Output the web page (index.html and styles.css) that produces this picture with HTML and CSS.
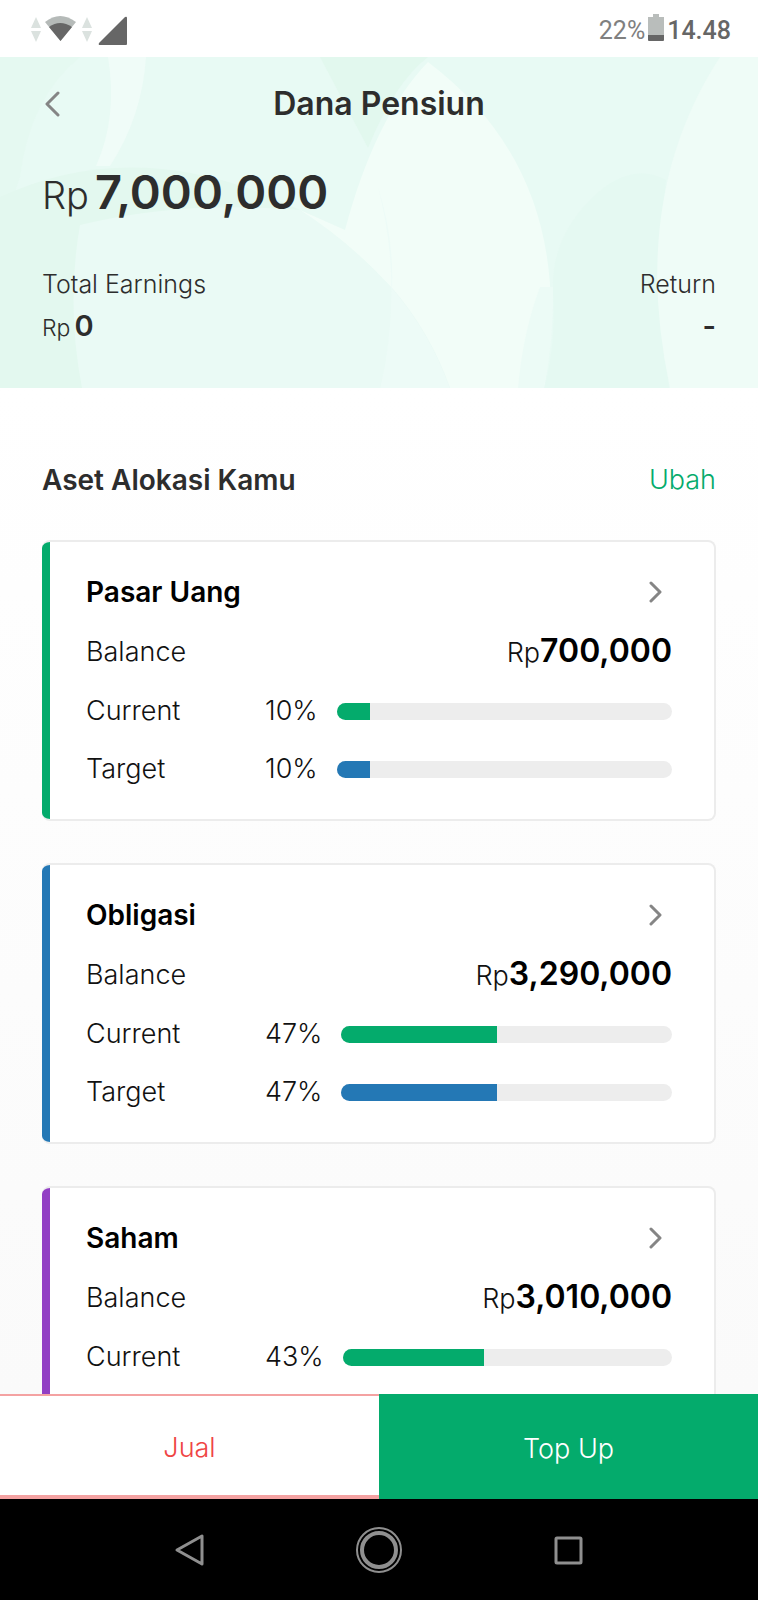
FILE: index.html
```html
<!DOCTYPE html>
<html lang="id">

<head>
    <meta charset="UTF-8">
    <meta name="viewport" content="width=device-width, initial-scale=1.0">
    <title>Dana Pensiun</title>
    <link rel="stylesheet" href="styles.css">
</head>

<body>
    <div class="status-bar">
        <svg class="signal-icons" width="98" height="32" viewBox="0 0 98 32">
            <path d="M0 13L5 2l5 11zM0 16l5 11 5-11zM51 13l5-11 5 11zM51 16l5 11 5-11z" fill="#dbe2df" />
            <path d="M14 7q15-12 31 0L29.500 26z" fill="#b5bab8" />
            <path d="M18 12q11-8 23 0L29.500 26z" fill="#666" />
            <path d="M94 2q2-1 2 1v26q0 1-1 1H69q-2 0-1-2z" fill="#666" />
        </svg>
        <div class="status-right">
            <span class="battery-level">22%</span>
            <svg width="16" height="27" viewBox="0 0 16 27">
                <path d="M5 0h6v3h5v18H0V3h5z" fill="#b9bdbb" />
                <path d="M0 21h16v5q0 1-1 1H1q-1 0-1-1z" fill="#666" />
            </svg>
            <span class="clock">14.48</span>
        </div>
    </div>

    <header class="summary">
        <svg class="summary-bg" viewBox="0 0 758 331" preserveAspectRatio="none">
            <rect width="758" height="331" fill="#e8faf4" />
            <path d="M0 0h80Q30 40 20 120L0 180z" fill="#e5f9f1" />
            <path d="M108 0h38q-4 60-36 109H96Q118 60 108 0z" fill="#f0fcf8" />
            <path d="M320 0h108Q395 25 368 91z" fill="#e2f8ee" />
            <path d="M0 140Q140 75 300 153 350 185 392 231 430 275 450 331H0z" fill="#e3f8ef" />
            <path d="M80 168q-14 80 2 163h298q14-60 12-100-42-46-92-78-120-10-220 15z" fill="#eafaf5" />
            <path d="M428 5Q375 60 345 173L300 153q50 32 92 78 38 44 58 100h94Q580 120 428 5z" fill="#f2fdf8" />
            <path d="M378 130q26 100 2 201h70q-20-56-58-100 2-50-14-101z" fill="#edfbf7" />
            <path d="M553 233q-2-50 37-90 40-40 76-20l-9 100 12 108H544q12-40 9-98z" fill="#e5f9f2" />
            <path d="M540 230q-17 45-22 101h26q10-50 9-101z" fill="#ecfbf6" />
            <path d="M720 0q-91 140-50 331h88V0z" fill="#effcf7" />
        </svg>
        <div class="title-bar">
            <button class="back-btn" aria-label="Kembali">
                <svg width="16" height="26" viewBox="0 0 16 26">
                    <path d="M14 2L3 13l11 11" />
                </svg>
            </button>
            <h1>Dana Pensiun</h1>
        </div>
        <p class="total"><span>Rp</span><strong>7,000,000</strong></p>
        <div class="earnings">
            <div>
                <p class="earnings-label">Total Earnings</p>
                <p class="earnings-value"><span>Rp</span><strong>0</strong></p>
            </div>
            <div class="return">
                <p class="earnings-label">Return</p>
                <p class="earnings-value"><strong>-</strong></p>
            </div>
        </div>
    </header>

    <main>
        <div class="section-head">
            <h2>Aset Alokasi Kamu</h2>
            <a href="#">Ubah</a>
        </div>

        <section class="card green">
            <div class="row">
                <h3>Pasar Uang</h3>
                <a class="open" href="#" aria-label="Pasar Uang">
                    <svg width="14" height="22" viewBox="0 0 14 22">
                        <path d="M2 2l9 9-9 9" />
                    </svg>
                </a>
            </div>
            <div class="row">
                <span>Balance</span>
                <span>Rp<strong>700,000</strong></span>
            </div>
            <div class="row bar-row">
                <span class="label">Current</span>
                <span>10%</span>
                <div class="bar"><div class="fill" style="width: 10%"></div></div>
            </div>
            <div class="row bar-row">
                <span class="label">Target</span>
                <span>10%</span>
                <div class="bar"><div class="fill target" style="width: 10%"></div></div>
            </div>
        </section>

        <section class="card blue">
            <div class="row">
                <h3>Obligasi</h3>
                <a class="open" href="#" aria-label="Obligasi">
                    <svg width="14" height="22" viewBox="0 0 14 22">
                        <path d="M2 2l9 9-9 9" />
                    </svg>
                </a>
            </div>
            <div class="row">
                <span>Balance</span>
                <span>Rp<strong>3,290,000</strong></span>
            </div>
            <div class="row bar-row">
                <span class="label">Current</span>
                <span>47%</span>
                <div class="bar"><div class="fill" style="width: 47%"></div></div>
            </div>
            <div class="row bar-row">
                <span class="label">Target</span>
                <span>47%</span>
                <div class="bar"><div class="fill target" style="width: 47%"></div></div>
            </div>
        </section>

        <section class="card purple">
            <div class="row">
                <h3>Saham</h3>
                <a class="open" href="#" aria-label="Saham">
                    <svg width="14" height="22" viewBox="0 0 14 22">
                        <path d="M2 2l9 9-9 9" />
                    </svg>
                </a>
            </div>
            <div class="row">
                <span>Balance</span>
                <span>Rp<strong>3,010,000</strong></span>
            </div>
            <div class="row bar-row">
                <span class="label">Current</span>
                <span>43%</span>
                <div class="bar"><div class="fill" style="width: 43%"></div></div>
            </div>
        </section>
    </main>

    <div class="actions">
        <button class="sell-btn">Jual</button>
        <button class="topup-btn">Top Up</button>
    </div>

    <nav class="nav-bar">
        <button aria-label="Back">
            <svg width="48" height="48" viewBox="0 0 48 48">
                <path d="M36 10v28L11 24z" stroke-width="3" stroke-linejoin="round" />
            </svg>
        </button>
        <button aria-label="Home">
            <svg width="48" height="48" viewBox="0 0 48 48">
                <circle cx="24" cy="24" r="22" stroke-width="2" />
                <circle cx="24" cy="24" r="17" stroke-width="4" />
            </svg>
        </button>
        <button aria-label="Recent apps">
            <svg width="48" height="48" viewBox="0 0 48 48">
                <rect x="12" y="12" width="25" height="25" rx="1" stroke-width="3" />
            </svg>
        </button>
    </nav>
</body>

</html>
```
FILE: styles.css
```css
* {
    box-sizing: border-box;
}

body {
    font-family: Inter, Lato, sans-serif;
    font-size: 27px;
    font-weight: 300;
    line-height: 36px;
    margin: 0;
    height: 100vh;
    display: flex;
    flex-direction: column;
    color: #111;
}

h1,
h2,
h3,
p {
    margin: 0;
}

h1,
h2,
h3,
strong {
    font-weight: 600;
}

h2,
h3 {
    font-size: 28px;
}

a {
    text-decoration: none;
}

button {
    font-family: inherit;
    font-size: 27px;
    font-weight: 300;
    border: none;
    padding: 0;
    background: none;
    cursor: pointer;
}

svg {
    display: block;
}

.status-bar {
    flex: none;
    height: 57px;
    padding: 4px 27px 0 31px;
    display: flex;
    align-items: center;
    justify-content: space-between;
    background-color: #fff;
    font-family: Roboto, sans-serif;
    font-size: 25px;
}

.status-right {
    display: flex;
    align-items: center;
    gap: 3px;
}

.status-right svg {
    margin-bottom: 6px;
}

.battery-level {
    font-weight: 400;
    color: #808080;
}

.clock {
    font-weight: 500;
    color: #666;
}

.summary {
    flex: none;
    position: relative;
    padding: 24px 42px 37px;
    color: #2d2d2d;
}

.summary-bg {
    position: absolute;
    top: 0;
    left: 0;
    width: 100%;
    height: 100%;
    z-index: -1;
}

.title-bar {
    display: grid;
    grid-template-columns: 40px 1fr 40px;
    align-items: center;
    height: 46px;
}

.title-bar h1 {
    font-size: 32px;
    text-align: center;
}

.back-btn {
    padding-left: 2px;
}

.back-btn path,
.open path {
    fill: none;
    stroke: #858585;
    stroke-width: 3;
    stroke-linecap: round;
    stroke-linejoin: round;
}

.total {
    margin-top: 35px;
    font-size: 38px;
    line-height: 60px;
}

.total strong {
    font-size: 47px;
    margin-left: 6px;
}

.earnings {
    margin-top: 40px;
    display: flex;
    justify-content: space-between;
}

.return {
    text-align: right;
}

.earnings-label {
    font-size: 25px;
    line-height: 38px;
}

.earnings-value {
    font-size: 23px;
    line-height: 45px;
}

.earnings-value strong {
    font-size: 29px;
    margin-left: 4px;
}

main {
    flex: 1;
    min-height: 0;
    overflow: hidden;
    padding: 74px 42px 0;
    background: linear-gradient(#fff, #fafafa);
}

.section-head {
    display: flex;
    justify-content: space-between;
    margin-bottom: 42px;
    color: #2d2d2d;
}

.section-head a {
    color: #04ab6c;
}

.card {
    position: relative;
    overflow: hidden;
    height: 281px;
    margin-bottom: 42px;
    padding: 20px 42px 0 44px;
    background-color: #fff;
    border: 2px solid #ececec;
    border-left: none;
    border-radius: 8px;
}

/* coloured strip on the left edge, drawn over the border */
.card::before {
    content: "";
    position: absolute;
    top: -2px;
    bottom: -2px;
    left: 0;
    width: 8px;
}

.green::before {
    background-color: #04ab6c;
}

.blue::before {
    background-color: #2478b5;
}

.purple::before {
    background-color: #923fc4;
}

.row {
    display: flex;
    align-items: center;
    justify-content: space-between;
    height: 60px;
}

.bar-row {
    height: 58px;
}

.row strong {
    font-size: 32px;
}

.row h3,
.row strong {
    color: #000;
}

.open {
    margin-right: 9px;
}

.label {
    width: 179px;
}

.bar {
    flex: 1;
    height: 17px;
    margin-left: 19px;
    overflow: hidden;
    border-radius: 9px;
    background-color: #ededed;
}

.fill {
    height: 100%;
    background-color: #04ab6c;
}

.target {
    background-color: #2478b5;
}

.actions {
    flex: none;
    display: grid;
    grid-template-columns: 1fr 1fr;
    height: 105px;
}

.actions button {
    padding-top: 3px;
}

.sell-btn {
    background-color: #fff;
    border-top: 2px solid #f4a2a2;
    border-bottom: 4px solid #f4a2a2;
    color: #ef4444;
}

.topup-btn {
    background-color: #04ab6c;
    color: #fff;
}

.nav-bar {
    flex: none;
    display: flex;
    justify-content: center;
    align-items: center;
    gap: 141px;
    height: 101px;
    background-color: #000;
}

.nav-bar svg {
    fill: none;
    stroke: #8f8f8f;
}
```
